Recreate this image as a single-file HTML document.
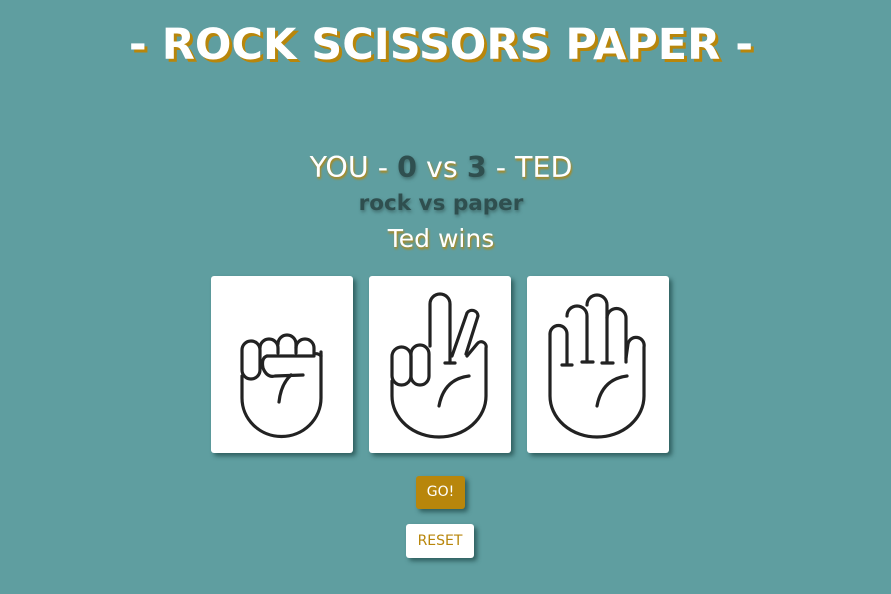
<!DOCTYPE html>
<html><head><meta charset="utf-8"><style>
html,body{margin:0;padding:0;width:891px;height:594px;overflow:hidden;background:#5f9ea0;font-family:"DejaVu Sans","Liberation Sans",sans-serif;}
.t{position:absolute;left:0;width:882px;text-align:center;white-space:nowrap}
h1{margin:0;position:absolute;left:0;top:20px;width:882px;text-align:center;font-size:43px;font-weight:bold;color:#fff;text-shadow:3px 3px 0 #b8860b}
.card{position:absolute;top:276px;width:142px;height:177px;background:#fff;border-radius:3px;box-shadow:3px 3px 5px #2f5f5f}
.card svg{position:absolute;left:0;top:0}
.btn{position:absolute;border-radius:3px;font-size:14px;text-align:center;box-shadow:3px 3px 5px #2f5f5f}
</style></head><body>
<h1>- ROCK SCISSORS PAPER -</h1>
<div class="t" style="top:151px;font-size:28.5px;color:#fff;text-shadow:1px 2px 2px #b8860b">YOU - <b style="color:#2f4f4f;text-shadow:1px 2px 3px rgba(47,79,79,.6)">0</b> vs <b style="color:#2f4f4f;text-shadow:1px 2px 3px rgba(47,79,79,.6)">3</b> - TED</div>
<div class="t" style="top:191px;font-size:21.5px;font-weight:bold;color:#2f4f4f;text-shadow:1px 2px 3px rgba(47,79,79,.6)">rock vs paper</div>
<div class="t" style="top:224px;font-size:25px;color:#fff;text-shadow:1px 2px 2px #b8860b">Ted wins</div>

<div class="card" style="left:211px"><svg width="142" height="177" fill="none" stroke="#222" stroke-width="3.2" stroke-linecap="round" stroke-linejoin="round">
<path d="M31 100 V122 A39 38 0 0 0 110 122 V76"/>
<rect x="31" y="65" width="18" height="38" rx="9"/>
<path d="M49 72 A9 9 0 0 1 67 72 V77"/>
<path d="M67 68 A9 9 0 0 1 85 68 V77"/>
<path d="M85 72 A9 9 0 0 1 103 72 V78 A7 7 0 0 1 110 80"/>
<path d="M56 80 Q50 82 52 92 Q56 102 64 100 L92 99"/>
<path d="M56 80 H103"/>
<path d="M80 99 Q70 108 68 126"/>
</svg></div>

<div class="card" style="left:369px"><svg width="142" height="177" fill="none" stroke="#222" stroke-width="3.2" stroke-linecap="round" stroke-linejoin="round">
<path d="M23 105 V120 A47 41 0 0 0 117 120 V72 A5 5 0 0 0 108 68 L98 80"/>
<rect x="23" y="71" width="19" height="38" rx="9.5"/>
<rect x="42" y="69" width="18" height="40" rx="9"/>
<path d="M61 70 V28 A10 10 0 0 1 81 28 V87"/>
<path d="M76 87 H86"/>
<path d="M83 80 L98 37 A6 6 0 0 1 109 40 L97 78"/>
<path d="M100 100 Q75 103 70 130"/>
</svg></div>

<div class="card" style="left:527px"><svg width="142" height="177" fill="none" stroke="#222" stroke-width="3.2" stroke-linecap="round" stroke-linejoin="round">
<path d="M23 58 V120 A47 41 0 0 0 117 120 V71 A8 8 0 0 0 101 68 L99 82"/>
<path d="M23 58 A8.5 8.5 0 0 1 40 58 V88"/>
<path d="M40 40 A10 10 0 0 1 60 40 V86"/>
<path d="M60 29 A10 10 0 0 1 80 29 V86"/>
<path d="M80 42 A9.5 9.5 0 0 1 99 42 V86"/>
<path d="M35 89 H45 M55 86 H66 M75 87 H86"/>
<path d="M100 100 Q75 103 70 130"/>
</svg></div>

<div class="btn" style="left:416px;top:476px;width:49px;height:33px;line-height:33px;background:#b8860b;color:#fff">GO!</div>
<div class="btn" style="left:406px;top:524px;width:68px;height:34px;line-height:34px;background:#fff;color:#b8860b">RESET</div>
</body></html>
